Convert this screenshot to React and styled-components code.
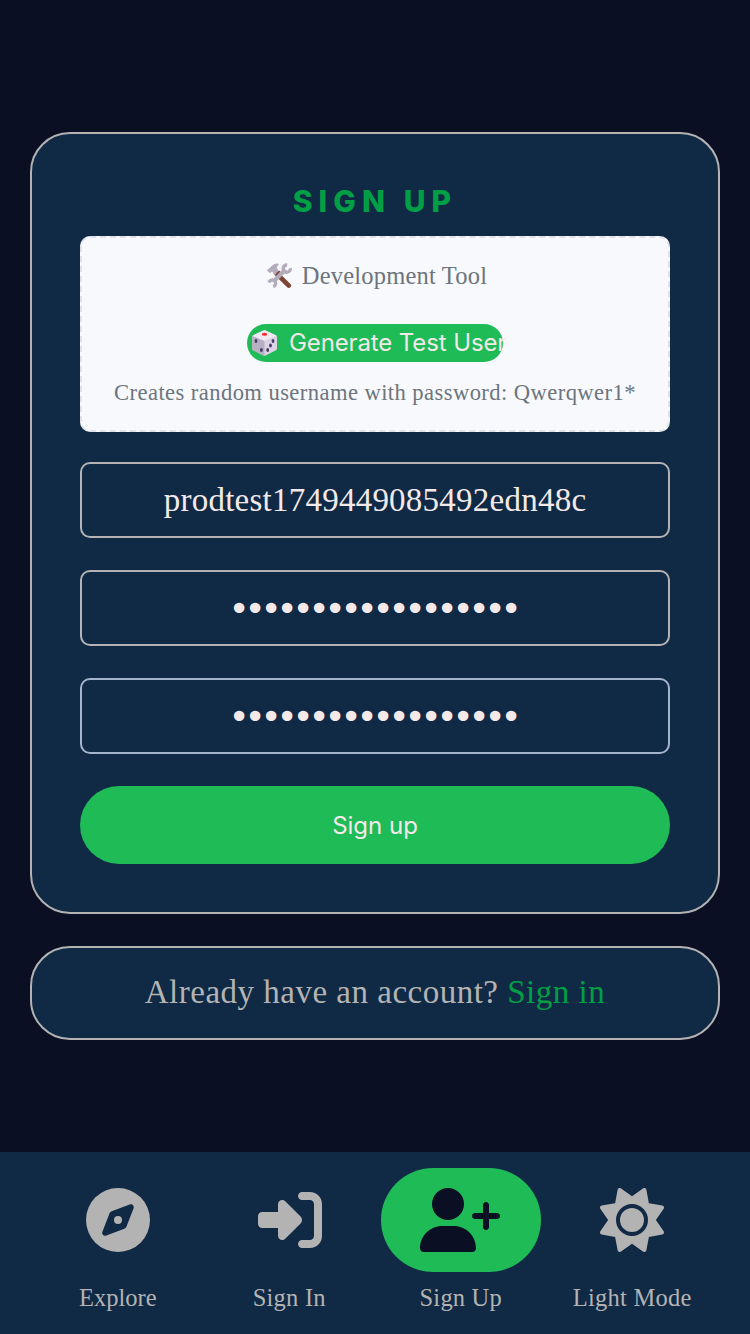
import React from "react";
import styled, { createGlobalStyle } from "styled-components";
import { FaCompass, FaRightToBracket, FaUserPlus, FaSun } from "react-icons/fa6";

const slab = '"Liberation Serif", serif';
const sans = "Inter, sans-serif";

const GlobalStyle = createGlobalStyle`
  *, *::before, *::after { box-sizing: border-box; }
  body { margin: 0; background: #0a0f24; }
`;

const Page = styled.div`
  height: 1334px;
  display: flex;
  flex-direction: column;
  background: #0a0f24;
  font-family: ${slab};
`;

const Main = styled.main`
  flex: 1;
  display: flex;
  flex-direction: column;
  gap: 32px;
  padding: 132px 30px 0;
`;

const Panel = styled.section`
  background: #102945;
  border: 2px solid #b3b3b3;
  border-radius: 40px;
`;

const Card = styled(Panel)`
  height: 782px;
  padding: 48px;
  display: flex;
  flex-direction: column;
`;

const Title = styled.h1`
  height: 54px;
  margin: 0;
  font: 800 30px/38px ${sans};
  letter-spacing: 6.1px;
  text-align: center;
  color: #009f45;
`;

const DevTool = styled.div`
  height: 196px;
  margin-bottom: 30px;
  padding: 22px 0 0;
  display: flex;
  flex-direction: column;
  align-items: center;
  border: 2px dashed #dee2e6;
  border-radius: 10px;
  background: #f8f9fc;
  color: #6c757d;
`;

const Line = styled.div`
  padding-left: ${(p) => p.$indent || 0}px;
  display: flex;
  align-items: center;
  gap: 10px;
  font-size: ${(p) => p.$size}px;
  letter-spacing: ${(p) => p.$track}px;
  line-height: 32px;
  white-space: pre;
`;

const Emoji = styled.svg`
  width: 25px;
  height: 26px;
  flex: none;
`;

const GenerateButton = styled.button`
  width: 256px;
  height: 38px;
  margin: 32px 0 15px;
  padding: 0 0 0 5px;
  display: flex;
  align-items: center;
  gap: 12px;
  border: 0;
  border-radius: 19px;
  background: #1fbb57;
  color: #f3e9e9;
  font: 400 24px/40px ${sans};
  letter-spacing: -0.12px;
  white-space: pre;
`;

const Form = styled.form`
  display: flex;
  flex-direction: column;
  gap: 32px;
`;

const Field = styled.input`
  width: 100%;
  height: 76px;
  padding: 0 16px;
  border: 2px solid ${(p) => p.$edge || "#b3b3b3"};
  border-radius: 10px;
  outline: 0;
  background: transparent;
  color: #f3e9e9;
  font: 33px ${slab};
  letter-spacing: 0.24px;
  text-align: center;
`;

const PasswordField = styled(Field)`
  padding: 1px 21px 0 16px;
  font: 36px "DejaVu Sans", sans-serif;
  letter-spacing: -5.24px;
`;

const Submit = styled.button`
  height: 78px;
  border: 0;
  border-radius: 39px;
  background: #1fbb57;
  color: #f3e9e9;
  font: 400 24px ${sans};
`;

const Prompt = styled(Panel)`
  height: 94px;
  text-align: center;
  color: #b3b3b3;
  font-size: 33px;
  line-height: 88px;
  letter-spacing: 0.5px;
`;

const Link = styled.a`
  color: #009f45;
`;

const Nav = styled.nav`
  height: 182px;
  padding: 16px 32px 0;
  display: grid;
  grid-template-columns: repeat(4, 1fr);
  background: #102945;
`;

const NavItem = styled.a`
  display: flex;
  flex-direction: column;
  align-items: center;
  color: #b3b3b3;
  font-size: 24.5px;
  line-height: 32px;
  letter-spacing: ${(p) => p.$track}px;
  white-space: nowrap;
`;

const Pill = styled.span`
  width: 160px;
  height: 104px;
  margin-bottom: 10px;
  padding-left: ${(p) => p.$inset}px;
  padding-right: ${(p) => (p.$active ? 2 : 0)}px;
  display: flex;
  align-items: center;
  justify-content: center;
  border-radius: 52px;
  background: ${(p) => (p.$active ? "#1fbb57" : "transparent")};
  color: ${(p) => (p.$active ? "#0a0f24" : "inherit")};

  svg {
    flex: none;
    height: 64px;
    width: ${(p) => (p.$active ? 80 : 64)}px;
  }
`;

const items = [
  { label: "Explore", Icon: FaCompass, track: 0, inset: 0 },
  { label: "Sign In", Icon: FaRightToBracket, track: 0.25, inset: 1 },
  { label: "Sign Up", Icon: FaUserPlus, track: 0.2, inset: 0, active: true },
  { label: "Light Mode", Icon: FaSun, track: 0.25, inset: 0 },
];

const Tools = () => (
  <Emoji viewBox="0 0 25 26" aria-hidden="true">
    <path d="M9 10 L21.8 22.6" stroke="#7d4533" strokeWidth="4.6" strokeLinecap="round" />
    <path d="M0 7.6 L5.2 2.4 Q7.5 .4 11 .6 L11.8 1.8 L9.6 4.2 L11.8 8.4 L7.8 12 L5 8.6 L3 10.3 Z" fill="#b4acbc" />
    <path d="M9.2 10.2 L12.2 7.4 L13.6 8.8 L10.6 11.8 Z" fill="#7d4533" />
    <path d="M6.5 18.5 L18.5 6.5" stroke="#b4acbc" strokeWidth="4.2" />
    <path d="M20.2 2.1 A3.6 3.6 0 1 0 23.3 5.2" fill="none" stroke="#b4acbc" strokeWidth="3.4" />
    <path d="M2 19.4 A3.4 3.4 0 1 1 6.3 23.6" fill="none" stroke="#b4acbc" strokeWidth="3.4" />
  </Emoji>
);

const Die = () => (
  <Emoji viewBox="0 0 25 26" aria-hidden="true">
    <path d="M11.4.6 Q12.5.1 13.6.6 L24 5.2 Q25 6 25 7 V18.5 Q25 19.7 24 20.2 L13.6 25.5 Q12.5 26 11.4 25.5 L1 20.2 Q0 19.7 0 18.5 V7 Q0 6 1 5.2 Z" fill="#dcd3e4" />
    <path d="M.2 6 L12.5 11 V25.9 L1 20.2 Q0 19.7 0 18.5 Z" fill="#b8afc2" />
    <path d="M.5 5.7 L11.4.6 Q12.5.1 13.6.6 L24.5 5.7 L12.5 10.8 Z" fill="#f0e9f3" />
    <ellipse cx="12.5" cy="4.2" rx="2.8" ry="1.5" fill="#f8312f" />
    <g fill="#433b6b">
      <ellipse cx="4" cy="11" rx="1.4" ry="2" />
      <ellipse cx="9.4" cy="20" rx="1.4" ry="2" />
      <ellipse cx="21" cy="11" rx="1.4" ry="2" />
      <ellipse cx="18.5" cy="15.5" rx="1.4" ry="2" />
      <ellipse cx="15.7" cy="20" rx="1.4" ry="2" />
    </g>
  </Emoji>
);

export default function App() {
  return (
    <Page>
      <GlobalStyle />
      <Main>
        <Card>
          <Title>SIGN UP</Title>
          <DevTool>
            <Line $size={24.5} $track={0.2} $indent={4}><Tools />Development Tool</Line>
            <GenerateButton><Die />Generate Test User</GenerateButton>
            <Line $size={22.6} $track={0.42}>Creates random username with password: Qwerqwer1*</Line>
          </DevTool>
          <Form>
            <Field type="text" defaultValue="prodtest1749449085492edn48c" />
            <PasswordField type="password" defaultValue="Qwerqwer1*Qwerqwer" />
            <PasswordField type="password" defaultValue="Qwerqwer1*Qwerqwer" $edge="#a3b5cc" />
            <Submit type="button">Sign up</Submit>
          </Form>
        </Card>
        <Prompt>Already have an account? <Link>Sign in</Link></Prompt>
      </Main>
      <Nav>
        {items.map(({ label, Icon, track, inset, active }) => (
          <NavItem key={label} $track={track}>
            <Pill $active={active} $inset={inset}><Icon /></Pill>
            {label}
          </NavItem>
        ))}
      </Nav>
    </Page>
  );
}
